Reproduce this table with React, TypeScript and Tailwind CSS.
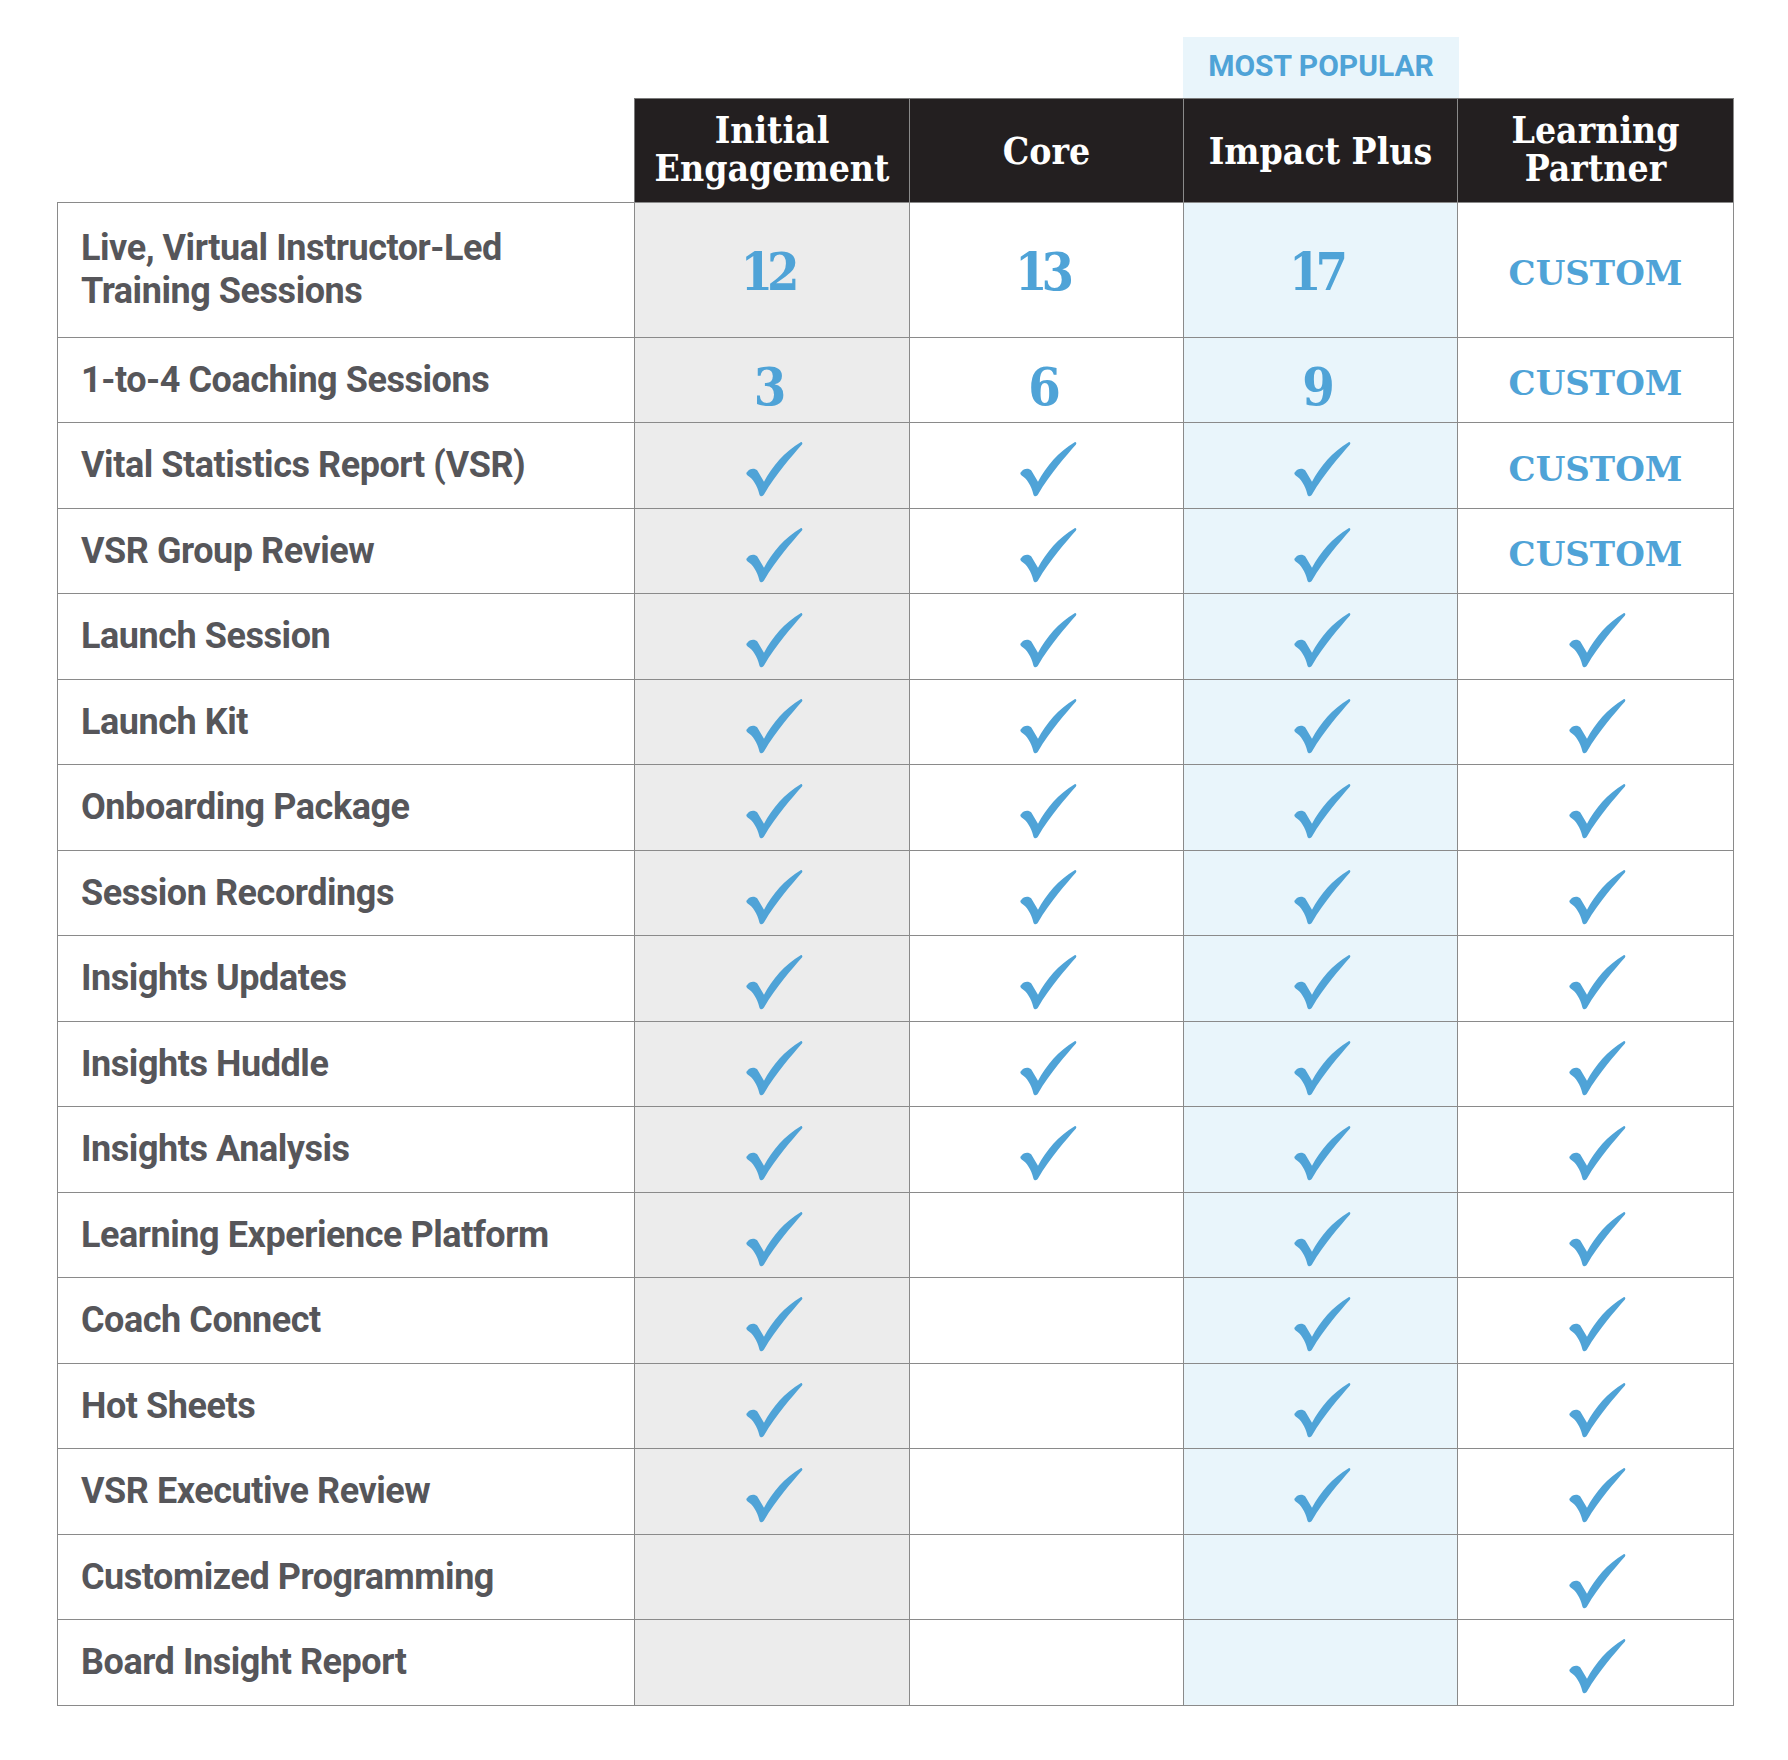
import React from "react";

type V = "C" | "X" | "-" | string;

const rows: { label: React.ReactNode; v: V[]; h: number; nOff?: string }[] = [
  { label: <>Live, Virtual Instructor-Led<br />Training Sessions</>, v: ["12", "13", "17", "X"], h: 135 },
  { label: "1-to-4 Coaching Sessions", v: ["3", "6", "9", "X"], h: 85, nOff: "mt-[14px]" },
  { label: "Vital Statistics Report (VSR)", v: ["C", "C", "C", "X"], h: 86 },
  { label: "VSR Group Review", v: ["C", "C", "C", "X"], h: 85 },
  { label: "Launch Session", v: ["C", "C", "C", "C"], h: 86 },
  { label: "Launch Kit", v: ["C", "C", "C", "C"], h: 85 },
  { label: "Onboarding Package", v: ["C", "C", "C", "C"], h: 86 },
  { label: "Session Recordings", v: ["C", "C", "C", "C"], h: 85 },
  { label: "Insights Updates", v: ["C", "C", "C", "C"], h: 86 },
  { label: "Insights Huddle", v: ["C", "C", "C", "C"], h: 85 },
  { label: "Insights Analysis", v: ["C", "C", "C", "C"], h: 86 },
  { label: "Learning Experience Platform", v: ["C", "-", "C", "C"], h: 85 },
  { label: "Coach Connect", v: ["C", "-", "C", "C"], h: 86 },
  { label: "Hot Sheets", v: ["C", "-", "C", "C"], h: 85 },
  { label: "VSR Executive Review", v: ["C", "-", "C", "C"], h: 86 },
  { label: "Customized Programming", v: ["-", "-", "-", "C"], h: 85 },
  { label: "Board Insight Report", v: ["-", "-", "-", "C"], h: 86 },
];

const colW = ["w-[275px]", "w-[274px]", "w-[274px]", "w-[276px]"];
const colBg = ["bg-[#ececec]", "bg-white", "bg-[#e9f5fb]", "bg-white"];

function Check() {
  return (
    <svg width="60" height="57" viewBox="25 15 180 170" className="mt-[6px] ml-[5px]">
      <path
        d="M32 110 C38 100 54 98 62 106 L82 140 C105 95 145 48 192 21 C195 19 199 24 196 28 C168 60 118 116 82 178 C78 185 70 185 68 177 C62 150 48 130 32 120 C28 117 28 113 32 110 Z"
        fill="#4fa3d7"
      />
    </svg>
  );
}

function Cell({ v, nOff }: { v: V; nOff?: string }) {
  if (v === "C") return <Check />;
  if (v === "-") return null;
  if (v === "X")
    return (
      <span className="font-['DejaVu_Serif',serif] font-bold text-[34px] leading-none text-[#4fa3d7] mt-[6px]">
        CUSTOM
      </span>
    );
  return (
    <span
      className={`font-['DejaVu_Serif',serif] font-stretch-condensed font-bold text-[52px] leading-none text-[#4fa3d7] tracking-[-6px] pr-[10px] ${nOff ?? "mt-[4px]"}`}
    >
      {v}
    </span>
  );
}

const headers: { h: React.ReactNode; two: boolean }[] = [
  { h: <>Initial<br />Engagement</>, two: true },
  { h: "Core", two: false },
  { h: "Impact Plus", two: false },
  { h: <>Learning<br />Partner</>, two: true },
];

export default function App() {
  return (
    <div className="w-[1788px] h-[1760px] bg-white pt-[37px] pl-[57px]">
      <div className="flex">
        <div className="w-[1126px]" />
        <div className="w-[276px] h-[61px] pb-[4px] bg-[#e9f5fb] flex items-center justify-center font-['Roboto',sans-serif] font-bold text-[30px] text-[#4fa3d7] leading-none">
          MOST POPULAR
        </div>
      </div>
      <div className="flex">
        <div className="w-[577px]" />
        <div className="flex h-[104px] border-t border-l border-[#7a7a7a] bg-[#231f20]">
          {headers.map((h, i) => (
            <div
              key={i}
              className={`${colW[i]} h-full border-r border-[#8a8a8a] flex items-center justify-center text-center text-white font-['DejaVu_Serif',serif] font-stretch-condensed font-bold text-[37px] leading-[38px]`}
            >
              <div className={h.two ? "-mt-[3px]" : "mt-[1px]"}>{h.h}</div>
            </div>
          ))}
        </div>
      </div>
      <div className="w-[1677px] border-t border-l border-[#8a8a8a]">
        {rows.map((r, ri) => (
          <div key={ri} className="flex border-b border-[#8a8a8a]" style={{ height: r.h }}>
            <div className="w-[577px] border-r border-[#8a8a8a] flex items-center pl-[23px] font-['Roboto',sans-serif] font-bold text-[36px] leading-[43px] tracking-[-0.45px] text-[#56565a]">
              <div>{r.label}</div>
            </div>
            {r.v.map((v, ci) => (
              <div
                key={ci}
                className={`${colW[ci]} ${colBg[ci]} border-r border-[#8a8a8a] flex items-center justify-center`}
              >
                <Cell v={v} nOff={r.nOff} />
              </div>
            ))}
          </div>
        ))}
      </div>
    </div>
  );
}
